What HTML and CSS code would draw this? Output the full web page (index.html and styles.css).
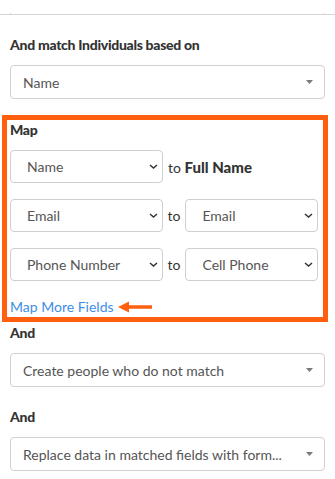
FILE: index.html
```html
<!DOCTYPE html>
<html lang="en">
<head>
    <meta charset="UTF-8">
    <meta name="viewport" content="width=device-width, initial-scale=1.0">
    <title>Match and map fields</title>
    <link rel="stylesheet" href="styles.css">
</head>
<body>
    <div class="topline"></div>
    <div class="cut-select"></div>

    <h3 class="label">And match Individuals based on</h3>
    <div class="dropdown">
        <span>Name</span>
        <svg class="caret" width="7" height="4" viewBox="0 0 7 4"><path d="M0 0h7L3.5 4z" fill="#7a7a7a"/></svg>
    </div>

    <div class="map-box">
        <h3 class="label">Map</h3>
        <div class="map-row">
            <div class="native left"><span>Name</span>
                <svg class="chev" width="9" height="5" viewBox="0 0 9 5"><path d="M1 1l3.5 3L8 1" fill="none" stroke="#333" stroke-width="1.5"/></svg>
            </div>
            <span class="to">to <b>Full Name</b></span>
        </div>
        <div class="map-row">
            <div class="native left"><span>Email</span>
                <svg class="chev" width="9" height="5" viewBox="0 0 9 5"><path d="M1 1l3.5 3L8 1" fill="none" stroke="#333" stroke-width="1.5"/></svg>
            </div>
            <span class="to">to</span>
            <div class="native right"><span>Email</span>
                <svg class="chev" width="9" height="5" viewBox="0 0 9 5"><path d="M1 1l3.5 3L8 1" fill="none" stroke="#333" stroke-width="1.5"/></svg>
            </div>
        </div>
        <div class="map-row">
            <div class="native left"><span>Phone Number</span>
                <svg class="chev" width="9" height="5" viewBox="0 0 9 5"><path d="M1 1l3.5 3L8 1" fill="none" stroke="#333" stroke-width="1.5"/></svg>
            </div>
            <span class="to">to</span>
            <div class="native right"><span>Cell Phone</span>
                <svg class="chev" width="9" height="5" viewBox="0 0 9 5"><path d="M1 1l3.5 3L8 1" fill="none" stroke="#333" stroke-width="1.5"/></svg>
            </div>
        </div>
        <div class="more">
            <a href="#">Map More Fields</a>
            <svg width="36" height="12" viewBox="0 0 36 12"><path d="M34 6H8" stroke="#ff5f0f" stroke-width="3.5"/><path d="M0 6l11-5.5v11z" fill="#ff5f0f"/></svg>
        </div>
    </div>

    <h3 class="label first">And</h3>
    <div class="dropdown">
        <span>Create people who do not match</span>
        <svg class="caret" width="7" height="4" viewBox="0 0 7 4"><path d="M0 0h7L3.5 4z" fill="#7a7a7a"/></svg>
    </div>

    <h3 class="label">And</h3>
    <div class="dropdown">
        <span>Replace data in matched fields with form...</span>
        <svg class="caret" width="7" height="4" viewBox="0 0 7 4"><path d="M0 0h7L3.5 4z" fill="#7a7a7a"/></svg>
    </div>
</body>
</html>
```

FILE: styles.css
```css
body {
    font-family: 'Lato', 'Liberation Sans', sans-serif;
    font-size: 14px;
    color: #333;
    background: #fff;
    margin: 0;
    padding: 0 10px;
    overflow: hidden;
}
.topline {
    height: 14px;
    margin: 0 -10px;
    border-bottom: 1px solid #d4d4d4;
}
.cut-select {
    height: 1px;
    margin: -2px 0 0 0;
    border: 1px solid #d4d4d4;
    border-top: none;
    border-radius: 0 0 4px 4px;
}
.label {
    font-size: 14px;
    font-weight: 900;
    letter-spacing: -0.3px;
    line-height: 20px;
    margin: 20px 0 10px;
    color: #333;
}
.label.first {
    margin-top: 1px;
}
.dropdown {
    height: 32px;
    border: 1px solid #d0d0d0;
    border-radius: 4px;
    display: flex;
    align-items: center;
    justify-content: space-between;
    padding: 0 11px 0 12px;
    color: #555;
}
.map-box {
    margin: 16px -3px 0 -8px;
    border: 5px solid #ff5f0f;
    padding: 0 5px 0 3px;
}
.map-box .label {
    margin: 0 0 10px;
}
.map-row {
    display: flex;
    align-items: center;
    margin-bottom: 16px;
}
.native {
    height: 33px;
    border: 1px solid #cfcfcf;
    border-radius: 4px;
    display: flex;
    align-items: center;
    justify-content: space-between;
    padding: 0 4px 0 16px;
    color: #555;
    box-sizing: border-box;
}
.native.left {
    width: 153px;
}
.native.right {
    width: 133px;
}
.to {
    margin: 0 5px;
    color: #333;
}
.to b {
    font-size: 15px;
    font-weight: 900;
}
.more {
    display: flex;
    align-items: center;
    gap: 4px;
    line-height: 20px;
}
.more a {
    color: #3d8ee6;
    text-decoration: none;
}
```
